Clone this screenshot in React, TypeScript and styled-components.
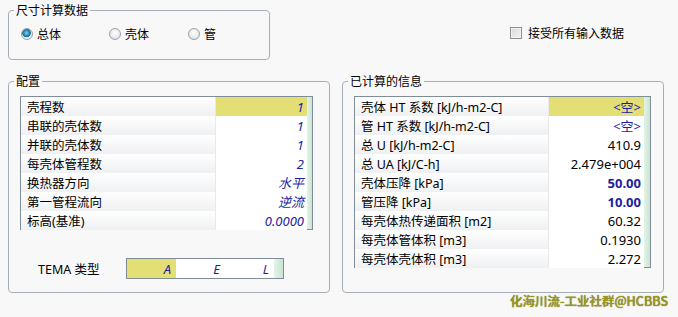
import React from 'react';
import styled, { createGlobalStyle } from 'styled-components';

const GlobalStyle = createGlobalStyle`
  body {
    margin: 0;
    background: #f8f8f8;
    font-family: "Noto Sans", "Noto Sans CJK SC", sans-serif;
    font-size: 12px;
    color: #000;
  }
`;

const Page = styled.div`
  width: 678px;
  height: 317px;
  padding: 0 8px;
  box-sizing: border-box;
  overflow: hidden;
`;

const TopRow = styled.div`
  display: flex;
  align-items: flex-start;
  padding-top: 3px;
`;

const Group = styled.fieldset<{ $width: number; $height: number }>`
  box-sizing: border-box;
  width: ${p => p.$width}px;
  height: ${p => p.$height}px;
  margin: 0;
  padding: 0;
  border: 1px solid #a6afb8;
  border-radius: 4px;
  min-width: 0;
`;

const Legend = styled.legend`
  margin-left: 5px;
  padding: 0 2px;
  font-size: 12px;
  line-height: 14px;
  font-family: "Noto Sans CJK SC", sans-serif;
`;

const RadioRow = styled.div`
  display: flex;
  padding: 10px 0 0 12px;
`;

const RadioItem = styled.label<{ $width: number }>`
  display: flex;
  align-items: center;
  gap: 4px;
  width: ${p => p.$width}px;
  font-size: 12px;
  line-height: 14px;
  font-family: "Noto Sans CJK SC", sans-serif;
`;

const RadioDot = styled.span<{ $checked?: boolean }>`
  width: 12px;
  height: 12px;
  box-sizing: border-box;
  border-radius: 50%;
  border: 1px solid #9aa1a8;
  background: ${p =>
    p.$checked
      ? 'radial-gradient(circle at 45% 40%, #8ed0ea 0, #2f8fb8 2.5px, #1f6f98 4px, #e6e9ec 4.6px, #f6f7f8 100%)'
      : 'radial-gradient(circle at 50% 40%, #ffffff 0, #e8e9ea 60%, #cfd2d5 100%)'};
`;

const CheckLabel = styled.label`
  display: flex;
  align-items: center;
  gap: 6px;
  margin: 23px 0 0 240px;
  font-size: 12px;
  line-height: 14px;
  font-family: "Noto Sans CJK SC", sans-serif;
`;

const CheckBox = styled.span`
  width: 12px;
  height: 12px;
  box-sizing: border-box;
  border: 1px solid #8e8f8f;
  background: linear-gradient(135deg, #d8d9da 0%, #f4f4f4 100%);
  box-shadow: inset 0 0 0 1px #f2f2f2;
`;

const BottomRow = styled.div`
  display: flex;
  gap: 12px;
  margin-top: 14px;
`;

const GroupBody = styled.div`
  padding: 8px 0 0 11px;
`;

const Table = styled.div<{ $width: number }>`
  display: flex;
  width: ${p => p.$width}px;
  box-sizing: border-box;
  border: 1px solid #7f8d98;
  background: #fff;
`;

const Rows = styled.div`
  flex: 1;
`;

const Strip = styled.div<{ $width: number }>`
  width: ${p => p.$width}px;
  background: linear-gradient(to right, #e4f3e8, #c9e5d1);
`;

const Row = styled.div<{ $labelWidth: number }>`
  display: grid;
  grid-template-columns: ${p => p.$labelWidth}px 1fr;
  height: 19px;
  box-sizing: border-box;
  border-bottom: 1px solid #e4e6e9;

  &:last-child {
    border-bottom: none;
    height: 18px;
  }
`;

const LabelCell = styled.div`
  display: flex;
  align-items: center;
  padding-left: 6px;
  background: linear-gradient(to bottom, #ffffff, #eff0f2);
  border-right: 1px solid #e8e9eb;
  white-space: nowrap;
  font-size: 12.5px;
`;

const ValueCell = styled.div<{ $highlight?: boolean; $italic?: boolean; $bold?: boolean; $blue?: boolean }>`
  display: flex;
  align-items: center;
  justify-content: flex-end;
  padding-right: 3px;
  background: ${p => (p.$highlight ? '#e3df74' : '#fff')};
  color: ${p => (p.$blue ? '#1e1e9e' : '#000')};
  font-style: ${p => (p.$italic ? 'italic' : 'normal')};
  font-weight: ${p => (p.$bold ? 700 : 400)};
  font-size: 13px;
  white-space: nowrap;
`;

const TemaRow = styled.div`
  display: flex;
  align-items: center;
  margin-top: 28px;
  padding-left: 18px;
`;

const TemaLabel = styled.span`
  width: 88px;
  font-size: 12.5px;
`;

const TemaBox = styled.div`
  display: flex;
  height: 21px;
  box-sizing: border-box;
  border: 1px solid #7f8d98;
  background: #fff;
`;

const TemaCell = styled.div<{ $highlight?: boolean }>`
  width: 49px;
  display: flex;
  align-items: center;
  justify-content: flex-end;
  padding-right: 5px;
  box-sizing: border-box;
  background: ${p => (p.$highlight ? '#e3df74' : '#fff')};
  color: #1e1e9e;
  font-style: italic;
  font-size: 13px;
`;

const Watermark = styled.div`
  text-align: right;
  padding-right: 2px;
  font-family: "Noto Sans CJK SC", sans-serif;
  font-weight: 500;
  font-size: 12.5px;
  line-height: 16px;
  color: #9a9820;
  text-shadow: 0 0 1px #5d5c10;
`;

type Item = {
  label: string;
  value: string;
  highlight?: boolean;
  italic?: boolean;
  bold?: boolean;
  blue?: boolean;
};

const configRows: Item[] = [
  { label: '壳程数', value: '1', highlight: true, italic: true, blue: true },
  { label: '串联的壳体数', value: '1', italic: true, blue: true },
  { label: '并联的壳体数', value: '1', italic: true, blue: true },
  { label: '每壳体管程数', value: '2', italic: true, blue: true },
  { label: '换热器方向', value: '水平', italic: true, blue: true },
  { label: '第一管程流向', value: '逆流', italic: true, blue: true },
  { label: '标高(基准)', value: '0.0000', italic: true, blue: true },
];

const calcRows: Item[] = [
  { label: '壳体 HT 系数 [kJ/h-m2-C]', value: '<空>', highlight: true, blue: true },
  { label: '管 HT 系数 [kJ/h-m2-C]', value: '<空>', blue: true },
  { label: '总 U [kJ/h-m2-C]', value: '410.9' },
  { label: '总 UA [kJ/C-h]', value: '2.479e+004' },
  { label: '壳体压降 [kPa]', value: '50.00', bold: true, blue: true },
  { label: '管压降 [kPa]', value: '10.00', bold: true, blue: true },
  { label: '每壳体热传递面积 [m2]', value: '60.32' },
  { label: '每壳体管体积 [m3]', value: '0.1930' },
  { label: '每壳体壳体积 [m3]', value: '2.272' },
];

const DataTable: React.FC<{ rows: Item[]; width: number; labelWidth: number; strip: number }> = ({
  rows,
  width,
  labelWidth,
  strip,
}) => (
  <Table $width={width}>
    <Rows>
      {rows.map(r => (
        <Row key={r.label} $labelWidth={labelWidth}>
          <LabelCell>{r.label}</LabelCell>
          <ValueCell $highlight={r.highlight} $italic={r.italic} $bold={r.bold} $blue={r.blue}>
            {r.value}
          </ValueCell>
        </Row>
      ))}
    </Rows>
    <Strip $width={strip} />
  </Table>
);

export default function App() {
  return (
    <Page>
      <GlobalStyle />
      <TopRow>
        <Group $width={262} $height={57}>
          <Legend>尺寸计算数据</Legend>
          <RadioRow>
            <RadioItem $width={88}>
              <RadioDot $checked />
              总体
            </RadioItem>
            <RadioItem $width={79}>
              <RadioDot />
              壳体
            </RadioItem>
            <RadioItem $width={40}>
              <RadioDot />
              管
            </RadioItem>
          </RadioRow>
        </Group>
        <CheckLabel>
          <CheckBox />
          接受所有输入数据
        </CheckLabel>
      </TopRow>
      <BottomRow>
        <Group $width={322} $height={219}>
          <Legend>配置</Legend>
          <GroupBody>
            <DataTable rows={configRows} width={293} labelWidth={195} strip={5} />
            <TemaRow>
              <TemaLabel>TEMA 类型</TemaLabel>
              <TemaBox>
                <TemaCell $highlight>A</TemaCell>
                <TemaCell>E</TemaCell>
                <TemaCell>L</TemaCell>
                <Strip $width={9} />
              </TemaBox>
            </TemaRow>
          </GroupBody>
        </Group>
        <Group $width={322} $height={219}>
          <Legend>已计算的信息</Legend>
          <GroupBody>
            <DataTable rows={calcRows} width={297} labelWidth={194} strip={6} />
          </GroupBody>
        </Group>
      </BottomRow>
      <Watermark>化海川流-工业社群@HCBBS</Watermark>
    </Page>
  );
}
